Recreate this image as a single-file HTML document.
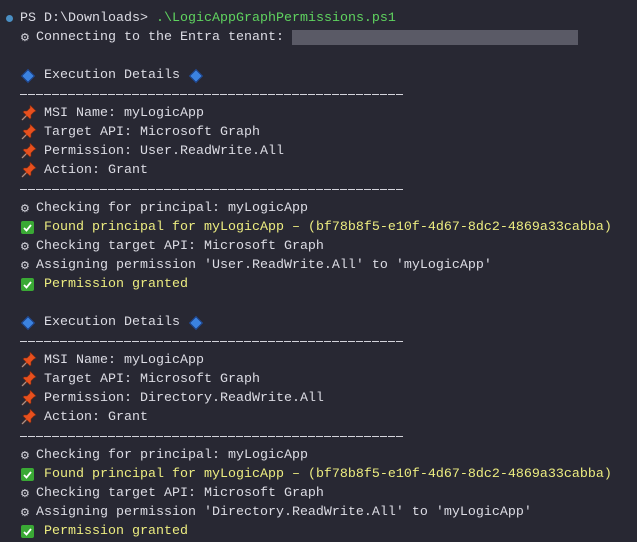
<!DOCTYPE html>
<html><head><meta charset="utf-8"><style>
html,body{margin:0;padding:0;background:#282833;width:637px;height:542px;overflow:hidden}
.t{position:absolute;left:0;top:9px;font-family:"Liberation Mono","DejaVu Sans Mono",monospace;font-size:13.33px;color:#dcdce4}
.l{height:19px;line-height:19px;white-space:pre;padding-left:20px;position:relative;overflow:hidden}
.l>*{vertical-align:top}
.y{color:#ecec80}.g{color:#5fd35f}
.ic{display:inline-block;width:16px;height:19px;position:relative}
.ic svg{position:absolute;left:1px;top:1px}
.gear{display:inline-block;width:8px;font-family:"DejaVu Sans",sans-serif;font-size:11px}
.chk{position:absolute;left:1px;top:3px;width:13px;height:13px;background:#3aa935;border-radius:2px}
.chk svg{display:block;position:static}
.dia{position:absolute;left:3px;top:5px;width:8px;height:8px;background:#3b82e0;transform:rotate(45deg);border:1px solid #1b3d80}
.d{position:absolute;left:20px;top:9px;width:384px;height:1px;background:repeating-linear-gradient(90deg,#d4d4dc 0 7px,transparent 7px 8px)}
</style></head><body>
<svg width="0" height="0" style="position:absolute"><defs><g id="pin"><path d="M9 0l6 6-2 1-3 3 0 3-1 1-3-3-4 4-1 0 0-1 4-4-3-3 1-1 3 0 3-3z" fill="#e8501e" stroke="#7a2a10" stroke-width="0.6"/><path d="M1 15l4-4" stroke="#999" stroke-width="1.2"/></g></defs></svg>
<div class="t">
<div class="l"><span style="position:absolute;left:6px;top:6px;width:7px;height:7px;border-radius:50%;background:#4a8fc4"></span>PS D:\Downloads&gt; <span class="g">.\LogicAppGraphPermissions.ps1</span></div>
<div class="l"><span class="gear">⚙</span> Connecting to the Entra tenant: <span style="display:inline-block;width:286px;height:15px;margin-top:2px;background:#5a5a66"></span></div>
<div class="l"> </div>
<div class="l"><span class="ic"><span class="dia"></span></span> Execution Details <span class="ic"><span class="dia"></span></span></div>
<div class="l"><span class="d"></span></div>
<div class="l"><span class="ic"><svg width="16" height="16"><use href="#pin"/></svg></span> MSI Name: myLogicApp</div>
<div class="l"><span class="ic"><svg width="16" height="16"><use href="#pin"/></svg></span> Target API: Microsoft Graph</div>
<div class="l"><span class="ic"><svg width="16" height="16"><use href="#pin"/></svg></span> Permission: User.ReadWrite.All</div>
<div class="l"><span class="ic"><svg width="16" height="16"><use href="#pin"/></svg></span> Action: Grant</div>
<div class="l"><span class="d"></span></div>
<div class="l"><span class="gear">⚙</span> Checking for principal: myLogicApp</div>
<div class="l"><span class="ic"><span class="chk"><svg width="13" height="13"><path d="M3 7l2.5 2.5L10 4" stroke="#fff" stroke-width="1.8" fill="none"/></svg></span></span> <span class="y">Found principal for myLogicApp – (bf78b8f5-e10f-4d67-8dc2-4869a33cabba)</span></div>
<div class="l"><span class="gear">⚙</span> Checking target API: Microsoft Graph</div>
<div class="l"><span class="gear">⚙</span> Assigning permission 'User.ReadWrite.All' to 'myLogicApp'</div>
<div class="l"><span class="ic"><span class="chk"><svg width="13" height="13"><path d="M3 7l2.5 2.5L10 4" stroke="#fff" stroke-width="1.8" fill="none"/></svg></span></span> <span class="y">Permission granted</span></div>
<div class="l"> </div>
<div class="l"><span class="ic"><span class="dia"></span></span> Execution Details <span class="ic"><span class="dia"></span></span></div>
<div class="l"><span class="d"></span></div>
<div class="l"><span class="ic"><svg width="16" height="16"><use href="#pin"/></svg></span> MSI Name: myLogicApp</div>
<div class="l"><span class="ic"><svg width="16" height="16"><use href="#pin"/></svg></span> Target API: Microsoft Graph</div>
<div class="l"><span class="ic"><svg width="16" height="16"><use href="#pin"/></svg></span> Permission: Directory.ReadWrite.All</div>
<div class="l"><span class="ic"><svg width="16" height="16"><use href="#pin"/></svg></span> Action: Grant</div>
<div class="l"><span class="d"></span></div>
<div class="l"><span class="gear">⚙</span> Checking for principal: myLogicApp</div>
<div class="l"><span class="ic"><span class="chk"><svg width="13" height="13"><path d="M3 7l2.5 2.5L10 4" stroke="#fff" stroke-width="1.8" fill="none"/></svg></span></span> <span class="y">Found principal for myLogicApp – (bf78b8f5-e10f-4d67-8dc2-4869a33cabba)</span></div>
<div class="l"><span class="gear">⚙</span> Checking target API: Microsoft Graph</div>
<div class="l"><span class="gear">⚙</span> Assigning permission 'Directory.ReadWrite.All' to 'myLogicApp'</div>
<div class="l"><span class="ic"><span class="chk"><svg width="13" height="13"><path d="M3 7l2.5 2.5L10 4" stroke="#fff" stroke-width="1.8" fill="none"/></svg></span></span> <span class="y">Permission granted</span></div>
</div>
</body></html>
